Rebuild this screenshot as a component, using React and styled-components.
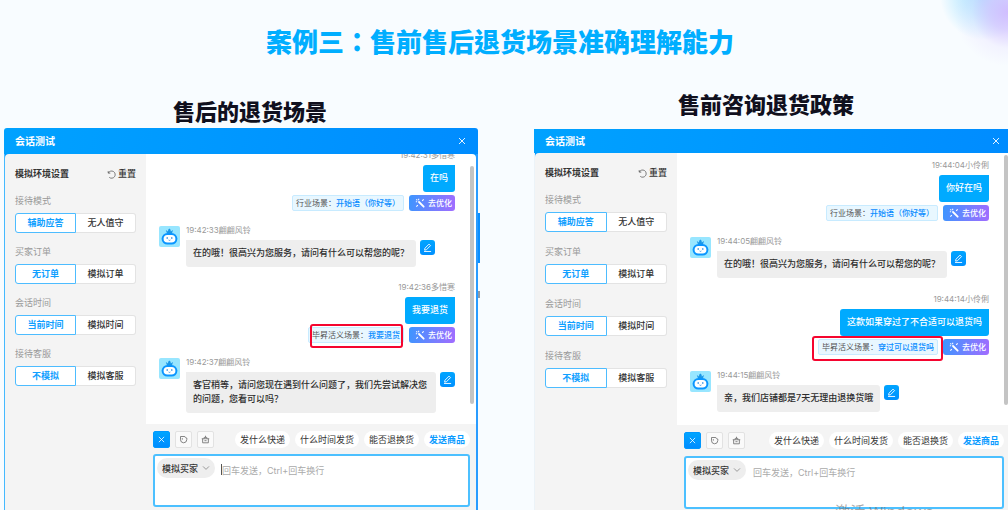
import React from "react";
import styled, { createGlobalStyle } from "styled-components";

const GlobalStyle = createGlobalStyle`
  * {
    box-sizing: border-box;
  }
  body {
    margin: 0;
    overflow: hidden;
    background: #f8fcff;
    font-family: Inter, "Noto Sans CJK SC", sans-serif;
  }
  button, select, textarea {
    font: inherit;
    margin: 0;
    padding: 0;
    border: 0;
    background: none;
    color: inherit;
  }
  h1, h2, h3, p {
    margin: 0;
  }
`;

const Page = styled.main`
  position: relative;
  height: 100vh;
  overflow: hidden;
  background: radial-gradient(
      circle at 100% 12px,
      rgba(208, 184, 255, 0.9) 0,
      rgba(212, 196, 255, 0.75) 18px,
      rgba(230, 222, 255, 0.3) 36px,
      rgba(248, 252, 255, 0) 54px
    ),
    radial-gradient(
      circle at calc(100% - 24px) -4px,
      rgba(160, 215, 255, 0.95) 0,
      rgba(170, 228, 255, 0.7) 20px,
      rgba(248, 252, 255, 0) 44px
    ),
    #f8fcff;
`;

const Title = styled.h1`
  padding: 22px 8px 0 0;
  text-align: center;
  font-family: "Noto Sans CJK TC", sans-serif;
  font-size: 26px;
  line-height: 38px;
  font-weight: 900;
  color: #00aeff;
`;

const Columns = styled.div`
  display: grid;
  grid-template-columns: 1fr 1fr;
  gap: 56px;
  padding: 28px 0 0 4px;
`;

const Column = styled.section`
  position: relative;
`;

const Caption = styled.h2`
  padding: ${({ $pad }) => $pad};
  text-align: center;
  font-size: 22px;
  line-height: 32px;
  font-weight: 900;
  color: #10101e;
`;

const Head = styled.header`
  display: flex;
  align-items: center;
  justify-content: space-between;
  height: ${({ $edged }) => ($edged ? 26 : 24)}px;
  padding: 0 ${({ $edged }) => ($edged ? 12 : 8)}px 0 11px;
  border-radius: ${({ $edged }) => ($edged ? "3px 3px 0 0" : 0)};
  background: linear-gradient(100deg, #00a2ff, #008cff);
  color: #fff;

  h3 {
    font-size: 10px;
    line-height: 16px;
    font-weight: 700;
  }
  button {
    display: flex;
  }
`;

const Body = styled.div`
  display: flex;
  overflow: hidden;
  border-left: 1px solid ${({ $edged }) => ($edged ? "#45b9ff" : "#ecf3f8")};
  border-right: ${({ $edged }) => ($edged ? "2px solid #2a9cff" : 0)};
  background: linear-gradient(#0096ff 8px, #f4f4f4 8px);
`;

const Sidebar = styled.aside`
  flex: none;
  width: ${({ $edged }) => ($edged ? 141 : 142)}px;
  padding: 13px 10px 0;
  border-radius: 4px 0 0 0;
  background: #f4f4f4;
`;

const SideHead = styled.div`
  display: flex;
  justify-content: space-between;
  font-size: 9px;
  line-height: 14px;
  color: #333;
  margin-bottom: 12px;

  h3 {
    font-size: 9px;
    font-weight: 700;
  }
  button {
    display: flex;
    align-items: center;
    gap: 2px;
    font-weight: 500;
  }
`;

const Field = styled.div`
  margin-bottom: ${({ $gap }) => $gap}px;
  font-size: 9px;
  line-height: 16px;
  color: #999;
`;

const Segments = styled.div`
  display: flex;
  margin-top: 4px;
`;

const Segment = styled.button`
  flex: 1;
  height: 20px;
  font-weight: ${({ $on }) => ($on ? 700 : 500)};
  color: ${({ $on }) => ($on ? "#10a0ff" : "#333")};
  background: #fff;
  border: 1px solid ${({ $on }) => ($on ? "#4dbcff" : "#e3e3e3")};
  border-left-width: ${({ $on }) => ($on ? 1 : 0)}px;
  border-radius: ${({ $on }) => ($on ? "3px 0 0 3px" : "0 3px 3px 0")};
`;

const Main = styled.div`
  flex: 1;
  min-width: 0;
`;

const Chat = styled.div`
  position: relative;
  overflow: hidden;
  padding: 0 ${({ $edged }) => ($edged ? 21 : 19)}px
    ${({ $edged }) => ($edged ? 11 : 13)}px 13px;
  border-radius: ${({ $edged }) => ($edged ? "0 4px 0 0" : 0)};
  background: #fff;
`;

const Thread = styled.div`
  display: flex;
  flex-direction: column;
  gap: ${({ $gap }) => $gap}px;
  margin-top: ${({ $scroll }) => $scroll}px;
`;

const Scrollbar = styled.div`
  position: absolute;
  top: ${({ $edged }) => ($edged ? 12 : 2)}px;
  right: ${({ $edged }) => ($edged ? 2 : 0)}px;
  bottom: 20px;
  width: 4px;
  border-radius: 2px;
  background: #c4c4c4;
`;

const Sent = styled.div`
  display: flex;
  flex-direction: column;
  align-items: flex-end;
`;

const Stamp = styled.time`
  font-size: 8px;
  line-height: ${({ $bot }) => ($bot ? 8 : 10)}px;
  margin-bottom: ${({ $bot }) => ($bot ? 6 : 5)}px;
  color: #999;
`;

const Bubble = styled.p`
  padding: 6px 7px 7px;
  font-size: 9px;
  line-height: 14px;
  font-weight: 500;
  color: ${({ $sent }) => ($sent ? "#fff" : "#2c2c2c")};
  background: ${({ $sent }) => ($sent ? "#00aaff" : "#eeeeee")};
  border-radius: ${({ $sent }) => ($sent ? "3px 0 3px 3px" : "0 3px 3px 3px")};
`;

const SceneRow = styled.div`
  display: flex;
  gap: 5px;
  margin-top: 3px;
  font-size: 8px;
  line-height: 14px;
`;

const Scene = styled.div`
  position: relative;
  height: 16px;
  padding: 0 3px;
  border: 1px solid #c8ebff;
  border-radius: 2px;
  background: #e8f7ff;
  color: #555;

  b {
    font-weight: 500;
    color: #0a8cff;
  }
`;

const Highlight = styled.span`
  position: absolute;
  inset: ${({ $inset }) => $inset};
  border: 2px solid #f5052f;
  border-radius: 3px;
`;

const Optimize = styled.button`
  display: flex;
  align-items: center;
  gap: 3px;
  width: 46px;
  height: 16px;
  padding-left: 6px;
  border-radius: 3px;
  background: linear-gradient(100deg, #3c96ff, #a26cff);
  color: #fff;
  font-weight: 500;
`;

const Received = styled.div`
  display: grid;
  grid-template-columns: 21px 1fr;
  column-gap: 6px;
`;

const Answer = styled.div`
  display: flex;
  flex-direction: column;
`;

const AnswerRow = styled.div`
  display: flex;
  align-items: flex-start;
  gap: 4px;
`;

const EditButton = styled.button`
  flex: none;
  display: grid;
  place-items: center;
  width: 15px;
  height: 15px;
  border-radius: 3px;
  background: linear-gradient(#00a5ff, #0090ff);
`;

const Footer = styled.footer`
  display: flex;
  flex-direction: column;
  gap: ${({ $edged }) => ($edged ? 6 : 7)}px;
  padding: 7px ${({ $edged }) => ($edged ? 6 : 4)}px 12px 7px;
`;

const Toolbar = styled.div`
  display: flex;
  gap: 5px;
  font-size: 9px;
`;

const Tool = styled.button`
  display: grid;
  place-items: center;
  width: 17px;
  height: 17px;
  border: 1px solid ${({ $on }) => ($on ? "#0098ff" : "#e2e2e2")};
  border-radius: 2px;
  background: ${({ $on }) =>
    $on ? "linear-gradient(#00a5ff, #008cff)" : "#fafafa"};
`;

const Chips = styled.div`
  display: flex;
  gap: 5px;
  margin-left: auto;
`;

const Chip = styled.button`
  height: 17px;
  padding: 0 5px;
  border-radius: 9px;
  background: #fff;
  white-space: nowrap;
  font-weight: ${({ $accent }) => ($accent ? 700 : 400)};
  color: ${({ $accent }) => ($accent ? "#0a9bff" : "#333")};
`;

const Composer = styled.div`
  display: flex;
  align-items: flex-start;
  height: 53px;
  padding: 2px;
  border: 2px solid #4cc0ff;
  border-radius: 3px;
  background: #fff;
  font-size: 9px;
`;

const Role = styled.label`
  position: relative;
  flex: none;
  width: 58px;
  height: 20px;
  border-radius: 10px;
  background: #eee;
  color: #333;
  font-weight: 500;

  select {
    appearance: none;
    width: 100%;
    height: 20px;
    padding-left: 5px;
  }
  svg {
    position: absolute;
    right: 5px;
    top: 6px;
    pointer-events: none;
  }
`;

const Caret = styled.span`
  width: 1px;
  height: 11px;
  margin: 6px 0 0 6px;
  background: ${({ $on }) => ($on ? "#555" : "transparent")};
`;

const Draft = styled.textarea`
  flex: 1;
  min-width: 0;
  height: 42px;
  padding-top: 6px;
  line-height: 14px;
  resize: none;
  outline: none;

  &::placeholder {
    color: #aaa;
    opacity: 1;
  }
`;

const Behind = styled.div`
  position: absolute;
  left: 100%;
  top: 125px;
  width: 2px;
  height: 50px;
  background: #0a8fff;

  &::after {
    content: "";
    position: absolute;
    top: 78px;
    left: 0;
    width: 2px;
    height: 7px;
    background: #8f9aa5;
  }
`;

const Watermark = styled.p`
  position: absolute;
  right: 75px;
  top: 500px;
  font-family: "Open Sans", "Noto Sans CJK SC", sans-serif;
  font-size: 15px;
  line-height: 22px;
  white-space: nowrap;
  color: rgba(110, 110, 110, 0.6);
`;

const CloseIcon = ({ size = 8 }) => (
  <svg width={size} height={size} viewBox="0 0 8 8" stroke="#fff" strokeWidth="0.9">
    <path d="M1 1l6 6M7 1L1 7" />
  </svg>
);

const ResetIcon = () => (
  <svg width="9" height="9" viewBox="0 0 12 12" fill="none" stroke="#555">
    <path d="M1.6 4.2V1.4M1.6 4.2h2.8M1.8 4A4.8 4.8 0 1 1 3 9.8" />
  </svg>
);

const WandIcon = () => (
  <svg width="10" height="10" viewBox="0 0 12 12" fill="none" stroke="#fff">
    <path d="M4.8 4.8l5.6 5.6" strokeWidth="2.2" strokeLinecap="round" />
    <path d="M4.4 1v1.6M1 4.4h1.6M1.6 1.6l1.2 1.2M8.6 3.4l1.8-1.8M3.4 8.6l-1.8 1.8" strokeWidth="1.3" />
  </svg>
);

const PenIcon = () => (
  <svg width="9" height="9" viewBox="0 0 12 12" fill="none" stroke="#fff">
    <path
      d="M2.6 7L8 1.5l2 2L4.6 9l-2.4.5zM1.4 11.3h9.4"
      strokeWidth="1.2"
    />
  </svg>
);

const BadgeIcon = () => (
  <svg width="9" height="9" viewBox="0 0 12 12" fill="none" stroke="#777">
    <path
      d="M2 2h5.8c.2 1.3 1 1.9 2.6 2v2.2A4.4 4.4 0 0 1 6.2 10.4 4.3 4.3 0 0 1 2 6.4zM4.4 4.2v2"
      strokeWidth="1.2"
    />
  </svg>
);

const BasketIcon = () => (
  <svg width="9" height="9" viewBox="0 0 12 12" fill="none" stroke="#777">
    <path
      d="M1 5h10M2.2 5v5.4h7.6V5M4.2 5V3.2h3.6V5M6 3.2V1M4.6 7.6h2.8"
      strokeWidth="1.2"
    />
  </svg>
);

const Chevron = () => (
  <svg width="8" height="8" viewBox="0 0 8 8" fill="none" stroke="#999">
    <path d="M1 2.4l3 3 3-3" />
  </svg>
);

const Avatar = () => (
  <svg width="21" height="21" viewBox="0 0 21 21">
    <rect width="21" height="21" rx="2" fill="#98e6ff" />
    <path
      d="M6.8 4l2.2 1.6.2-1.8 1.1-1.4 1.3 1.4.2 1.8L14 4l-1.2 4H8.2z"
      fill="#1a97e8"
    />
    <rect x="2.6" y="7" width="15.8" height="11.6" rx="5.8" fill="#0a96ff" />
    <rect x="4.6" y="9" width="11.8" height="7.6" rx="3.8" fill="#fff" />
    <circle cx="8.2" cy="12" r="0.8" fill="#0a78d8" />
    <circle cx="12.8" cy="12" r="0.8" fill="#0a78d8" />
    <path d="M9.6 14q.9.8 1.8 0" fill="none" stroke="#0a78d8" strokeWidth=".7" />
  </svg>
);

const fields = [
  ["接待模式", "辅助应答", "无人值守"],
  ["买家订单", "无订单", "模拟订单"],
  ["会话时间", "当前时间", "模拟时间"],
  ["接待客服", "不模拟", "模拟客服"],
];

const afterSale = [
  { time: "19:42:31多惜寒", text: "在吗", kind: "行业场景：", scene: "开始语（你好等）" },
  { bot: true, time: "19:42:33翩翩风铃", text: "在的哦！很高兴为您服务，请问有什么可以帮您的呢？" },
  {
    time: "19:42:36多惜寒",
    text: "我要退货",
    kind: "毕昇活义场景：",
    scene: "我要退货",
    mark: "-4px 0 -6px 1px",
  },
  {
    bot: true,
    time: "19:42:37翩翩风铃",
    text: "客官稍等，请问您现在遇到什么问题了，我们先尝试解决您的问题，您看可以吗？",
  },
];

const preSale = [
  { time: "19:44:04小伶俐", text: "你好在吗", kind: "行业场景：", scene: "开始语（你好等）" },
  { bot: true, time: "19:44:05翩翩风铃", text: "在的哦！很高兴为您服务，请问有什么可以帮您的呢？" },
  {
    time: "19:44:14小伶俐",
    text: "这款如果穿过了不合适可以退货吗",
    kind: "毕昇活义场景：",
    scene: "穿过可以退货吗",
    mark: "-4px -6px -7px -7px",
  },
  { bot: true, time: "19:44:15翩翩风铃", text: "亲，我们店铺都是7天无理由退换货哦" },
];

function Message({ bot, time, text, kind, scene, mark }) {
  if (bot) {
    return (
      <Received>
        <Avatar />
        <Answer>
          <Stamp $bot>{time}</Stamp>
          <AnswerRow>
            <Bubble>{text}</Bubble>
            <EditButton aria-label="编辑">
              <PenIcon />
            </EditButton>
          </AnswerRow>
        </Answer>
      </Received>
    );
  }
  return (
    <Sent>
      <Stamp>{time}</Stamp>
      <Bubble $sent>{text}</Bubble>
      <SceneRow>
        <Scene>
          {kind}
          <b>{scene}</b>
          {mark && <Highlight $inset={mark} />}
        </Scene>
        <Optimize>
          <WandIcon />
          去优化
        </Optimize>
      </SceneRow>
    </Sent>
  );
}

function TestWindow({ edged = false, messages, gap, scroll, fieldGap }) {
  return (
    <div>
      <Head $edged={edged}>
        <h3>会话测试</h3>
        <button aria-label="关闭">
          <CloseIcon />
        </button>
      </Head>
      <Body $edged={edged}>
        <Sidebar $edged={edged}>
          <SideHead>
            <h3>模拟环境设置</h3>
            <button>
              <ResetIcon />
              重置
            </button>
          </SideHead>
          {fields.map(([label, on, off]) => (
            <Field key={label} $gap={fieldGap}>
              {label}
              <Segments role="group" aria-label={label}>
                <Segment $on aria-pressed="true">
                  {on}
                </Segment>
                <Segment aria-pressed="false">{off}</Segment>
              </Segments>
            </Field>
          ))}
        </Sidebar>
        <Main>
          <Chat $edged={edged}>
            <Thread $gap={gap} $scroll={scroll}>
              {messages.map((message) => (
                <Message key={message.time} {...message} />
              ))}
            </Thread>
            <Scrollbar $edged={edged} />
          </Chat>
          <Footer $edged={edged}>
            <Toolbar>
              <Tool $on aria-label="收起">
                <CloseIcon size={7} />
              </Tool>
              <Tool aria-label="标签">
                <BadgeIcon />
              </Tool>
              <Tool aria-label="商品">
                <BasketIcon />
              </Tool>
              <Chips>
                <Chip>发什么快递</Chip>
                <Chip>什么时间发货</Chip>
                <Chip>能否退换货</Chip>
                <Chip $accent>发送商品</Chip>
              </Chips>
            </Toolbar>
            <Composer>
              <Role>
                <select aria-label="发送身份">
                  <option>模拟买家</option>
                </select>
                <Chevron />
              </Role>
              <Caret $on={edged} />
              <Draft aria-label="消息" placeholder="回车发送，Ctrl+回车换行" />
            </Composer>
          </Footer>
        </Main>
      </Body>
    </div>
  );
}

export default function App() {
  return (
    <>
      <GlobalStyle />
      <Page>
        <Title>案例三：售前售后退货场景准确理解能力</Title>
        <Columns>
          <Column>
            <Caption $pad="8px 0 0 18px">售后的退货场景</Caption>
            <TestWindow
              edged
              messages={afterSale}
              gap={15}
              scroll={-4}
              fieldGap={11}
            />
            <Behind />
          </Column>
          <Column>
            <Caption $pad="1px 10px 8px 0">售前咨询退货政策</Caption>
            <TestWindow
              messages={preSale}
              gap={16}
              scroll={7}
              fieldGap={12}
            />
          </Column>
        </Columns>
        <Watermark>激活 Windows</Watermark>
      </Page>
    </>
  );
}
